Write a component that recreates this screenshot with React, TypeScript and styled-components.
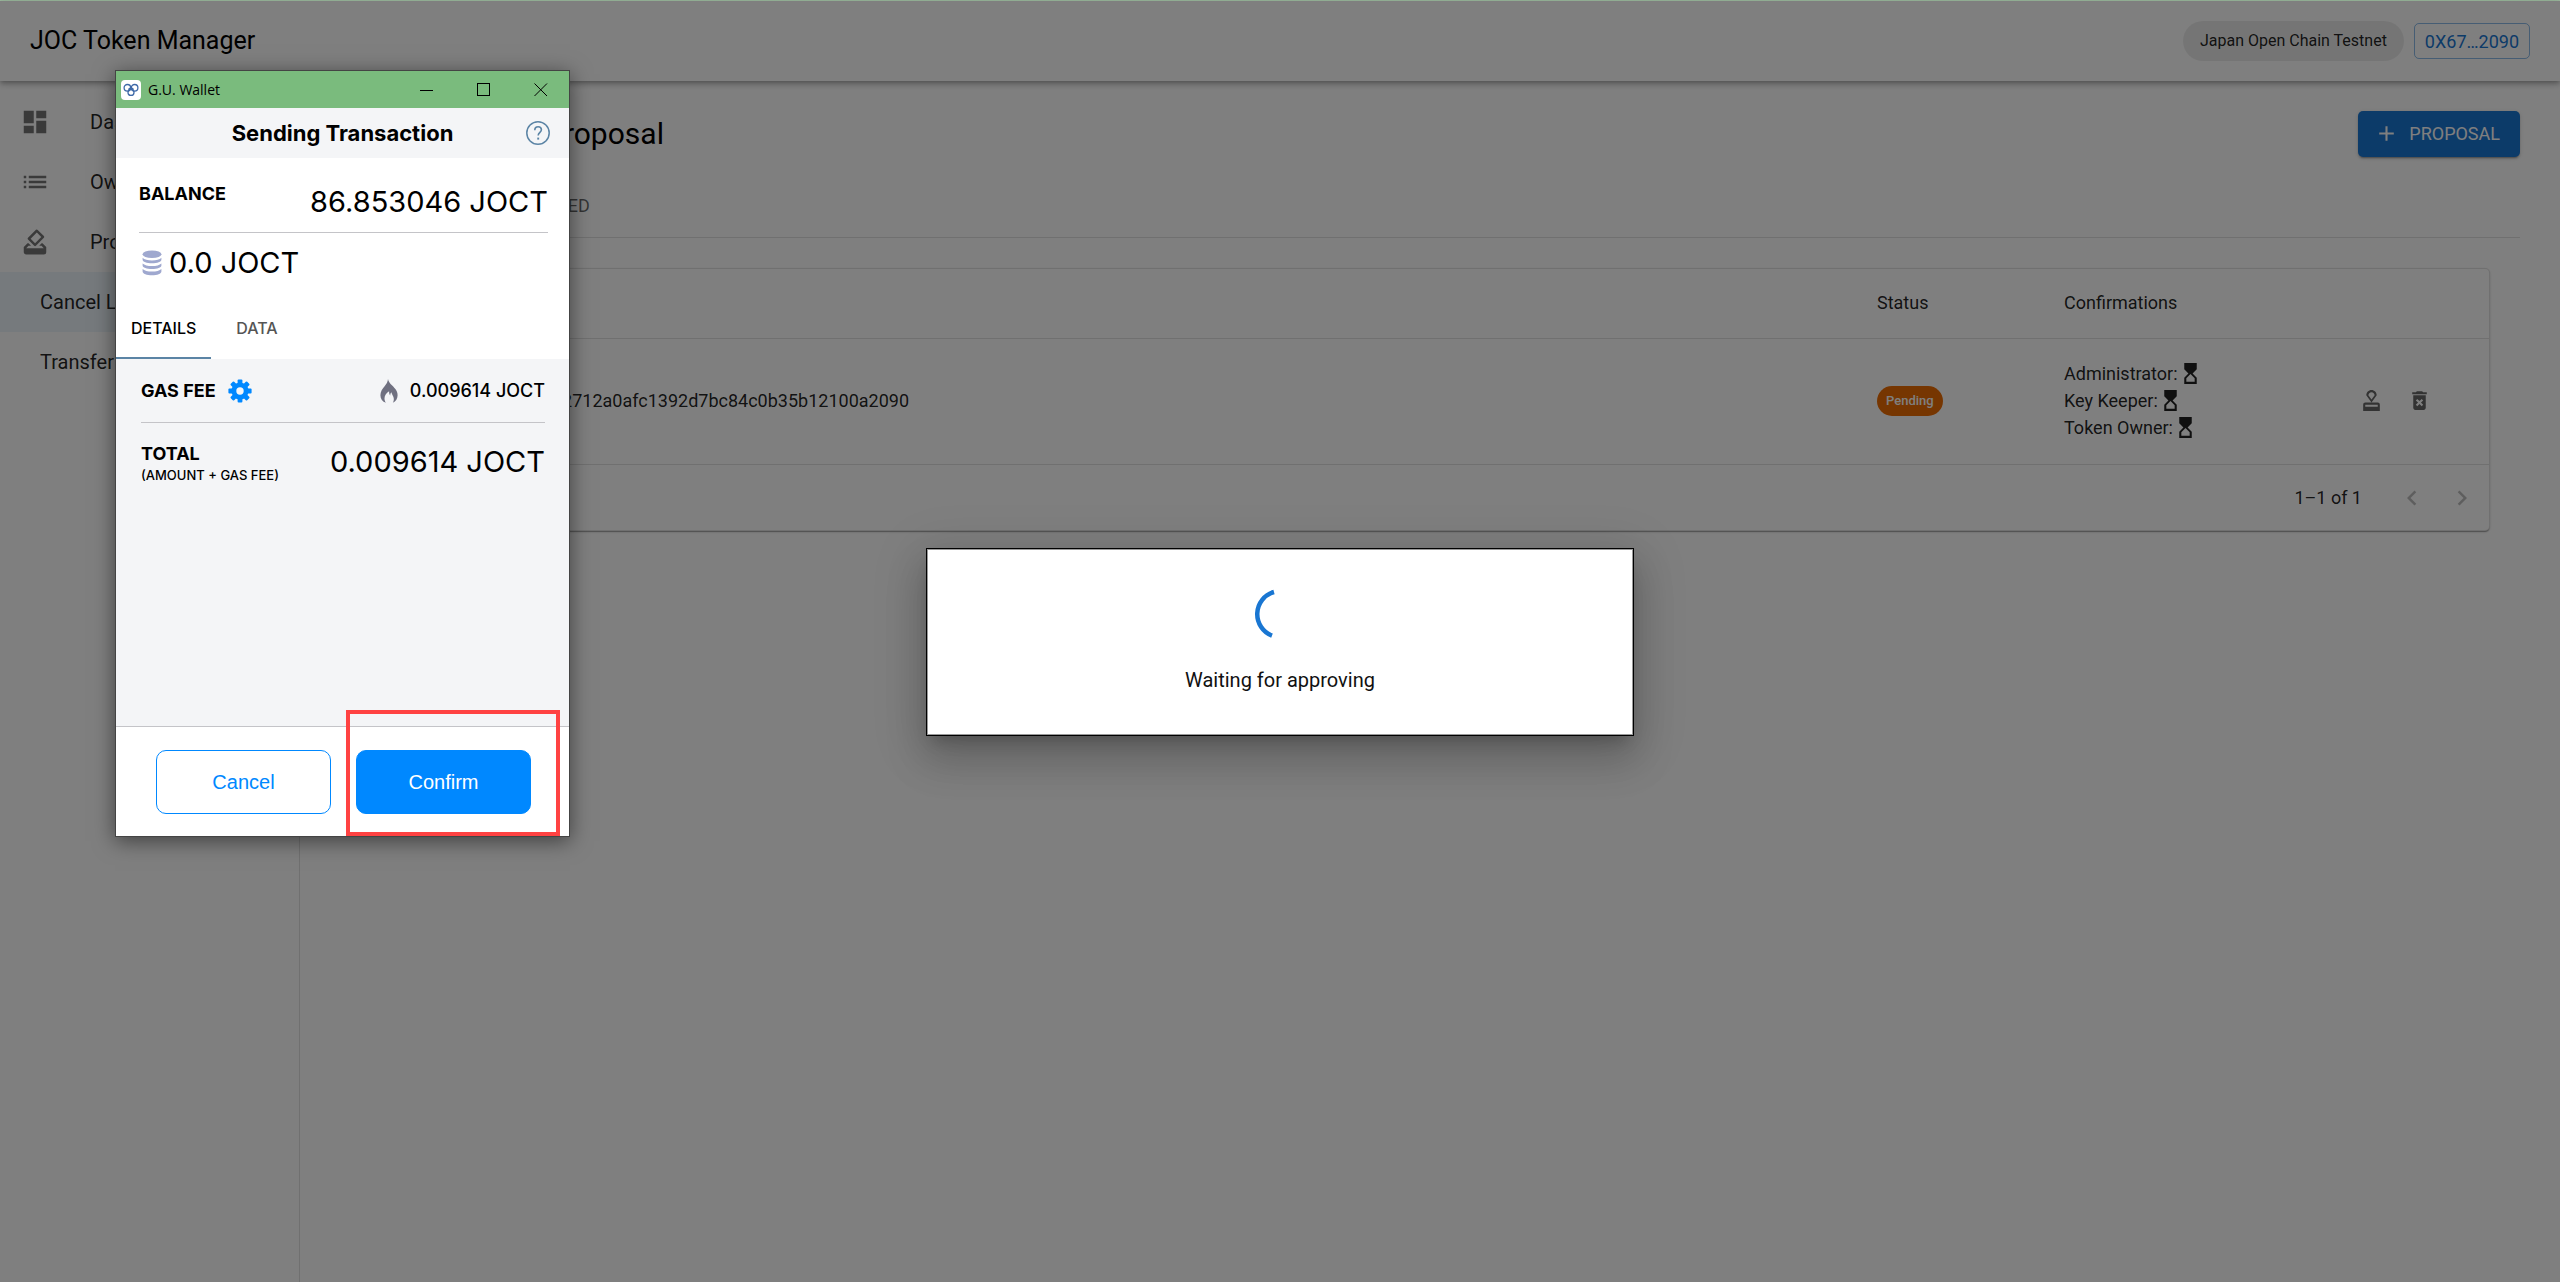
import React from "react";
import styled, { createGlobalStyle } from "styled-components";
import {
  MdAdd,
  MdDashboard,
  MdDeleteForever,
  MdHourglassTop,
  MdHowToVote,
  MdKeyboardArrowLeft,
  MdKeyboardArrowRight,
  MdList,
  MdOutlineApproval,
} from "react-icons/md";

const GlobalStyle = createGlobalStyle`
  *, *::before, *::after { box-sizing: border-box; }
  body {
    margin: 0;
    background: #fff;
    color: rgba(0, 0, 0, 0.87);
    font-family: Roboto, "Liberation Sans", sans-serif;
    font-size: 20px;
    line-height: 30px;
  }
  button { font-family: inherit; cursor: pointer; }
  svg { display: block; flex: none; }
`;

/* ---------- Application shell ---------- */

const Page = styled.div`
  position: relative;
  display: flex;
  flex-direction: column;
  min-height: 100vh;
  border-top: 1px solid #9bb89d;
`;

const AppBar = styled.header`
  display: flex;
  align-items: center;
  gap: 10px;
  height: 80px;
  padding: 0 30px;
  background: #fff;
  box-shadow: 0 2px 4px -1px rgba(0, 0, 0, 0.2), 0 4px 5px rgba(0, 0, 0, 0.14),
    0 1px 10px rgba(0, 0, 0, 0.12);
  z-index: 1;
`;

const AppTitle = styled.div`
  flex: 1;
  color: #000;
  font-size: 25px;
  line-height: 40px;
`;

const NetworkChip = styled.span`
  display: flex;
  align-items: center;
  height: 40px;
  padding: 0 17px;
  border-radius: 20px;
  background: rgba(0, 0, 0, 0.08);
  font-size: 16px;
`;

const AccountButton = styled.button`
  height: 36px;
  padding: 0 10px;
  border: 1px solid rgba(25, 118, 210, 0.5);
  border-radius: 5px;
  background: none;
  color: #1976d2;
  font-size: 18px;
`;

const Body = styled.div`
  display: flex;
  flex: 1;
`;

const Sidebar = styled.nav`
  width: 300px;
  padding-top: 11px;
  border-right: 1px solid rgba(0, 0, 0, 0.12);
`;

const NavLink = styled.a<{ $nested?: boolean; $selected?: boolean }>`
  display: flex;
  align-items: center;
  gap: 40px;
  height: 60px;
  padding-left: ${(p) => (p.$nested ? 40 : 20)}px;
  background: ${(p) => (p.$selected ? "rgba(25, 118, 210, 0.08)" : "none")};
  color: inherit;
  text-decoration: none;

  svg { color: rgba(0, 0, 0, 0.54); }
`;

const Main = styled.main`
  flex: 1;
  min-width: 0;
  padding: 30px 40px 30px 30px;
`;

const TitleRow = styled.div`
  display: flex;
  align-items: center;
  justify-content: space-between;
  margin-bottom: 20px;
`;

const PageTitle = styled.h1`
  margin: 0;
  color: #000;
  font-size: 30px;
  font-weight: 400;
  line-height: 40px;
`;

const ProposalButton = styled.button`
  display: flex;
  align-items: center;
  gap: 10px;
  height: 46px;
  padding: 0 20px 2px 16px;
  border: 0;
  border-radius: 5px;
  background: #1976d2;
  color: #fff;
  font-size: 18px;
  box-shadow: 0 3px 1px -2px rgba(0, 0, 0, 0.2), 0 2px 2px rgba(0, 0, 0, 0.14),
    0 1px 5px rgba(0, 0, 0, 0.12);
`;

const PageTabs = styled.div`
  display: flex;
  border-bottom: 1px solid rgba(0, 0, 0, 0.12);
`;

const PageTab = styled.button<{ $selected?: boolean }>`
  height: 60px;
  padding: 0 20px;
  border: 0;
  border-bottom: 3px solid ${(p) => (p.$selected ? "#1976d2" : "transparent")};
  background: none;
  color: ${(p) => (p.$selected ? "#1976d2" : "rgba(0, 0, 0, 0.6)")};
  font-size: 18px;
`;

const TabPanel = styled.section`
  padding: 30px;
`;

/* ---------- Proposal table ---------- */

const TableCard = styled.div`
  border: 1px solid rgba(0, 0, 0, 0.12);
  border-radius: 5px;
  background: #fff;
  font-size: 18px;
  box-shadow: 0 2px 1px -1px rgba(0, 0, 0, 0.2), 0 1px 1px rgba(0, 0, 0, 0.14),
    0 1px 3px rgba(0, 0, 0, 0.12);
`;

const Table = styled.table`
  width: 100%;
  border-spacing: 0;
  table-layout: fixed;
`;

const Column = styled.col<{ $width?: number }>`
  width: ${(p) => (p.$width ? `${p.$width}px` : "auto")};
`;

const HeadCell = styled.th`
  height: 70px;
  padding: 0 12px 2px;
  border-bottom: 1px solid rgba(0, 0, 0, 0.12);
  font-weight: 400;
  text-align: left;
`;

const Cell = styled.td`
  height: 126px;
  padding: 0 12px 2px;
  border-bottom: 1px solid rgba(0, 0, 0, 0.12);
`;

const StatusChip = styled.span`
  display: inline-flex;
  align-items: center;
  height: 30px;
  padding: 0 9px;
  border-radius: 15px;
  background: #ed6c02;
  color: #fff;
  font-size: 13px;
  font-weight: 500;
  vertical-align: middle;
`;

const Confirmation = styled.div`
  display: flex;
  align-items: center;
  height: 27px;
`;

const Actions = styled.div`
  display: flex;
  gap: 8px;
`;

const IconButton = styled.button<{ $size: number; $faded?: boolean }>`
  display: flex;
  align-items: center;
  justify-content: center;
  width: ${(p) => p.$size}px;
  height: ${(p) => p.$size}px;
  padding: 0;
  border: 0;
  background: none;
  color: ${(p) => (p.$faded ? "rgba(0, 0, 0, 0.26)" : "rgba(0, 0, 0, 0.6)")};
`;

const Pagination = styled.div`
  display: flex;
  align-items: center;
  justify-content: flex-end;
  height: 65px;
  padding-right: 2px;
`;

const PageRange = styled.span`
  margin-right: 25px;
`;

/* ---------- Blocking dialog ---------- */

const Backdrop = styled.div`
  position: absolute;
  inset: 0;
  display: flex;
  align-items: center;
  justify-content: center;
  background: rgba(0, 0, 0, 0.5);
  z-index: 2;
`;

const Dialog = styled.div`
  display: flex;
  flex-direction: column;
  align-items: center;
  gap: 26px;
  width: 708px;
  padding: 40px;
  border: 1px solid #000;
  background: #fff;
  color: #111;
  box-shadow: inset 0 0 0 1px rgba(0, 0, 0, 0.4),
    0 11px 15px -7px rgba(0, 0, 0, 0.2), 0 24px 38px 3px rgba(0, 0, 0, 0.14),
    0 9px 46px 8px rgba(0, 0, 0, 0.12);
`;

/* ---------- Wallet window ---------- */

const WalletWindow = styled.section`
  position: absolute;
  top: 69px;
  left: 115px;
  display: flex;
  flex-direction: column;
  width: 455px;
  height: 767px;
  border: 1px solid #444;
  background: #fff;
  color: #000;
  font-family: Inter, "Liberation Sans", sans-serif;
  box-shadow: 0 4px 20px rgba(0, 0, 0, 0.5);
  z-index: 3;
`;

const TitleBar = styled.div`
  display: flex;
  align-items: center;
  gap: 7px;
  height: 37px;
  padding-left: 5px;
  background: #7abb7d;
  font-family: "Open Sans", "Noto Sans", sans-serif;
  font-size: 14px;
`;

const WindowName = styled.span`
  flex: 1;
`;

const WindowButton = styled.button`
  display: flex;
  align-items: center;
  justify-content: center;
  width: 57px;
  height: 37px;
  padding: 0;
  border: 0;
  background: none;
  color: #000;
`;

const WindowButtons = styled.div`
  display: flex;
`;

const WalletHeader = styled.div`
  display: grid;
  grid-template-columns: 24px 1fr 24px;
  align-items: center;
  height: 50px;
  padding: 0 19px;
  background: #f4f5f7;
`;

const WalletTitle = styled.h2`
  margin: 0;
  font-size: 22px;
  font-weight: 700;
  text-align: center;
`;

const HelpButton = styled.button`
  width: 24px;
  height: 24px;
  padding: 0;
  border: 0;
  background: none;
  color: #5b84a5;
`;

const Summary = styled.div`
  height: 141px;
  padding: 0 21px 0 23px;
`;

const BalanceRow = styled.div`
  display: flex;
  align-items: flex-start;
  justify-content: space-between;
  height: 75px;
  padding-top: 20px;
  border-bottom: 1px solid #c4c4c8;
`;

const Label = styled.div`
  font-size: 18px;
  font-weight: 700;
  line-height: 32px;
`;

const Amount = styled.div`
  font-size: 29px;
  line-height: 48px;
`;

const SendRow = styled.div`
  display: flex;
  align-items: center;
  gap: 7px;
  height: 60px;
  padding-left: 3px;
`;

const WalletTabs = styled.div`
  display: flex;
  gap: 10px;
`;

const WalletTab = styled.button<{ $selected?: boolean }>`
  height: 60px;
  padding: 0 15px;
  border: 0;
  border-bottom: 2px solid ${(p) => (p.$selected ? "#5b84a5" : "transparent")};
  background: none;
  color: ${(p) => (p.$selected ? "#000" : "#555")};
  font-size: 16px;
  font-weight: 500;
`;

const Details = styled.div`
  flex: 1;
  padding: 0 24px 0 25px;
  border-bottom: 1px solid #c4c4c8;
  background: #f4f5f7;
`;

const FeeRow = styled.div`
  display: flex;
  align-items: center;
  justify-content: space-between;
  height: 64px;
  border-bottom: 1px solid #c4c4c8;
`;

const Inline = styled.div`
  display: flex;
  align-items: center;
  gap: 12px;
  font-size: 18px;
  font-weight: 500;
`;

const TotalRow = styled.div`
  display: flex;
  align-items: flex-start;
  justify-content: space-between;
  padding-top: 15px;
`;

const TotalNote = styled.div`
  font-size: 13px;
  font-weight: 500;
  line-height: 10px;
`;

const WalletFooter = styled.div`
  display: flex;
  gap: 25px;
  padding: 23px 0 22px 40px;
`;

const WalletButton = styled.button<{ $primary?: boolean }>`
  width: 175px;
  height: 64px;
  border: 1px solid #0088ff;
  border-radius: 10px;
  background: ${(p) => (p.$primary ? "#0088ff" : "#fff")};
  color: ${(p) => (p.$primary ? "#fff" : "#0088ff")};
  font-family: "Liberation Sans", Arial, sans-serif;
  font-size: 20px;
`;

/* Frame laid over the confirm button to point it out */
const Highlight = styled.div`
  position: absolute;
  right: 9px;
  bottom: 0;
  width: 214px;
  height: 126px;
  border: 4px solid #ff4242;
  pointer-events: none;
`;

/* ---------- Drawings ---------- */

const WalletLogo = () => (
  <svg width="20" height="20" viewBox="0 0 20 20" aria-hidden="true">
    <rect width="20" height="20" rx="4" fill="#fff" />
    <g fill="none" stroke="#3f6aa8" strokeWidth="1.3">
      <circle cx="6.4" cy="7.8" r="3.3" />
      <circle cx="13.6" cy="7.8" r="3.3" />
      <circle cx="10" cy="12.4" r="3" />
      <path d="M7.4 9.6 10 7.4l2.6 2.2" />
    </g>
  </svg>
);

const CoinsIcon = () => (
  <svg width="20" height="26" viewBox="0 0 20 26" fill="#9fa8cf" aria-hidden="true">
    <ellipse cx="10" cy="4.2" rx="9.4" ry="3.8" />
    <path d="M.6 7.8c1.6 1.7 5.2 2.6 9.4 2.6s7.8-.9 9.4-2.6v2c0 2.2-4.2 3.5-9.4 3.5S.6 12 .6 9.8z" />
    <path d="M.6 13.4c1.6 1.7 5.2 2.6 9.4 2.6s7.8-.9 9.4-2.6v2c0 2.2-4.2 3.5-9.4 3.5S.6 17.6.6 15.4z" />
    <path d="M.6 19c1.6 1.7 5.2 2.6 9.4 2.6s7.8-.9 9.4-2.6v2.4c0 2.2-4.2 3.9-9.4 3.9S.6 23.600.6 21.400z" />
  </svg>
);

const GearIcon = () => (
  <svg width="24" height="24" viewBox="-12 -12 24 24" aria-hidden="true">
    <g fill="#0088ff">
      {[0, 45, 90, 135].map((angle) => (
        <rect
          key={angle}
          x="-2.4"
          y="-11.6"
          width="4.8"
          height="23.2"
          rx="1"
          transform={`rotate(${angle})`}
        />
      ))}
      <circle r="8.6" />
    </g>
    <circle r="3.7" fill="#f4f5f7" />
  </svg>
);

const FlameIcon = () => (
  <svg width="18" height="24" viewBox="0 0 18 24" fill="#6f7080" aria-hidden="true">
    <path d="M8 0c.4 2.6 1.8 4.2 4.2 6.6C15 9.6 17.6 12 17.6 16.2c0 3.2-1.6 6-4.8 7.6.9-1.6 1.2-3 .9-4.8-.3-2.2-1.9-3.6-2.3-5.8-.9.9-1.2 1.9-1.1 3.2-.9-.9-1.3-2.3-1.2-4.2-3 2-4.6 4.400-4.600 7.200 0 1.700.5 3.100 1.500 4.400C2.400 22.600.4 19.800.4 16.200c0-3.600 2-6.400 4.200-9C6.400 5 7.800 3 8 0z" />
  </svg>
);

const HelpIcon = () => (
  <svg width="24" height="24" viewBox="0 0 24 24" fill="none" stroke="currentColor" aria-hidden="true">
    <circle cx="12" cy="12" r="11.2" strokeWidth="1.5" />
    <path d="M8.8 9.2c0-2 1.3-3.4 3.3-3.4s3.3 1.2 3.3 3c0 2.5-3.2 2.6-3.2 5.6" strokeWidth="1.6" />
    <path d="M12.2 16.6v2" strokeWidth="1.9" />
  </svg>
);

const Spinner = () => (
  <svg width="50" height="50" viewBox="0 0 50 50" role="progressbar" aria-label="Waiting">
    <path d="M19 3A23 23 0 0 0 17 46.6" fill="none" stroke="#1976d2" strokeWidth="4.5" />
  </svg>
);

/* ---------- Data ---------- */

const confirmers = ["Administrator:", "Key Keeper:", "Token Owner:"];

const WalletPopup = () => (
  <WalletWindow aria-label="G.U. Wallet">
    <TitleBar>
      <WalletLogo />
      <WindowName>G.U. Wallet</WindowName>
      <WindowButtons>
        <WindowButton aria-label="Minimize">
          <svg width="14" height="14" stroke="#000" fill="none"><path d="M0 7.5h13" /></svg>
        </WindowButton>
        <WindowButton aria-label="Maximize">
          <svg width="14" height="14" stroke="#000" fill="none"><rect x=".5" y=".5" width="12" height="12" /></svg>
        </WindowButton>
        <WindowButton aria-label="Close">
          <svg width="14" height="14" stroke="#000" fill="none"><path d="M.5.5l12.5 12.5M13 .5.5 13" /></svg>
        </WindowButton>
      </WindowButtons>
    </TitleBar>
    <WalletHeader>
      <span />
      <WalletTitle>Sending Transaction</WalletTitle>
      <HelpButton aria-label="Help"><HelpIcon /></HelpButton>
    </WalletHeader>
    <Summary>
      <BalanceRow>
        <Label>BALANCE</Label>
        <Amount>86.853046 JOCT</Amount>
      </BalanceRow>
      <SendRow>
        <CoinsIcon />
        <Amount>0.0 JOCT</Amount>
      </SendRow>
    </Summary>
    <WalletTabs role="tablist">
      <WalletTab role="tab" aria-selected $selected>DETAILS</WalletTab>
      <WalletTab role="tab" aria-selected={false}>DATA</WalletTab>
    </WalletTabs>
    <Details>
      <FeeRow>
        <Inline>
          <Label>GAS FEE</Label>
          <GearIcon />
        </Inline>
        <Inline>
          <FlameIcon />
          0.009614 JOCT
        </Inline>
      </FeeRow>
      <TotalRow>
        <div>
          <Label>TOTAL</Label>
          <TotalNote>(AMOUNT + GAS FEE)</TotalNote>
        </div>
        <Amount>0.009614 JOCT</Amount>
      </TotalRow>
    </Details>
    <WalletFooter>
      <WalletButton>Cancel</WalletButton>
      <WalletButton $primary>Confirm</WalletButton>
    </WalletFooter>
    <Highlight />
  </WalletWindow>
);

export default function App() {
  return (
    <>
      <GlobalStyle />
      <Page>
        <AppBar>
          <AppTitle>JOC Token Manager</AppTitle>
          <NetworkChip>Japan Open Chain Testnet</NetworkChip>
          <AccountButton>0X67…2090</AccountButton>
        </AppBar>
        <Body>
          <Sidebar>
            <NavLink href="#dashboard"><MdDashboard size={30} />Dashboard</NavLink>
            <NavLink href="#owners"><MdList size={30} />Owners</NavLink>
            <NavLink href="#proposals"><MdHowToVote size={30} />Proposals</NavLink>
            <NavLink href="#cancel" $nested $selected>Cancel Lock-Up</NavLink>
            <NavLink href="#transfer" $nested>Transfer</NavLink>
          </Sidebar>
          <Main>
            <TitleRow>
              <PageTitle>Cancel Lock-Up Proposal</PageTitle>
              <ProposalButton><MdAdd size={25} />PROPOSAL</ProposalButton>
            </TitleRow>
            <PageTabs role="tablist">
              <PageTab role="tab" aria-selected $selected>IN PROGRESS</PageTab>
              <PageTab role="tab" aria-selected={false}>EXECUTED</PageTab>
            </PageTabs>
            <TabPanel>
              <TableCard>
                <Table>
                  <colgroup>
                    <Column $width={140} />
                    <Column />
                    <Column $width={187} />
                    <Column $width={287} />
                    <Column $width={150} />
                  </colgroup>
                  <thead>
                    <tr>
                      <HeadCell>ID</HeadCell>
                      <HeadCell>To</HeadCell>
                      <HeadCell>Status</HeadCell>
                      <HeadCell>Confirmations</HeadCell>
                      <HeadCell aria-label="Actions" />
                    </tr>
                  </thead>
                  <tbody>
                    <tr>
                      <Cell>1</Cell>
                      <Cell>0x67a2712a0afc1392d7bc84c0b35b12100a2090</Cell>
                      <Cell><StatusChip>Pending</StatusChip></Cell>
                      <Cell>
                        {confirmers.map((name) => (
                          <Confirmation key={name}>{name}<MdHourglassTop size={25} /></Confirmation>
                        ))}
                      </Cell>
                      <Cell>
                        <Actions>
                          <IconButton $size={40} aria-label="Approve"><MdOutlineApproval size={25} /></IconButton>
                          <IconButton $size={40} aria-label="Delete"><MdDeleteForever size={25} /></IconButton>
                        </Actions>
                      </Cell>
                    </tr>
                  </tbody>
                </Table>
                <Pagination>
                  <PageRange>1–1 of 1</PageRange>
                  <IconButton $size={50} $faded aria-label="Previous page"><MdKeyboardArrowLeft size={30} /></IconButton>
                  <IconButton $size={50} $faded aria-label="Next page"><MdKeyboardArrowRight size={30} /></IconButton>
                </Pagination>
              </TableCard>
            </TabPanel>
          </Main>
        </Body>
        <Backdrop>
          <Dialog role="dialog" aria-modal>
            <Spinner />
            <div>Waiting for approving</div>
          </Dialog>
        </Backdrop>
        <WalletPopup />
      </Page>
    </>
  );
}
